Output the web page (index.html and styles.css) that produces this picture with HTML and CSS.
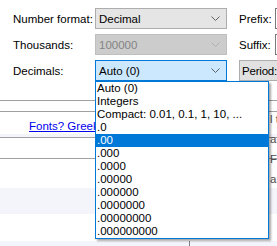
FILE: index.html
```html
<!DOCTYPE html>
<html>
<head>
<meta charset="utf-8">
<link rel="stylesheet" href="styles.css">
</head>
<body>
<div class="page">
  <div class="form">
    <div class="row">
      <span class="label">Number format:</span>
      <div class="select"><span>Decimal</span><svg class="chev" width="9" height="5" viewBox="0 0 9 5"><polyline points="0.5,0.5 4.5,4.5 8.5,0.5" fill="none" stroke="#606060" stroke-width="1"/></svg></div>
      <span class="rlabel">Prefix:</span>
      <div class="input"></div>
    </div>
    <div class="row">
      <span class="label">Thousands:</span>
      <div class="select disabled"><span>100000</span><svg class="chev" width="9" height="5" viewBox="0 0 9 5"><polyline points="0.5,0.5 4.5,4.5 8.5,0.5" fill="none" stroke="#b0b0b0" stroke-width="1"/></svg></div>
      <span class="rlabel">Suffix:</span>
      <div class="input"></div>
    </div>
    <div class="row">
      <span class="label">Decimals:</span>
      <div class="select focused"><span>Auto (0)</span><svg class="chev" width="9" height="5" viewBox="0 0 9 5"><polyline points="0.5,0.5 4.5,4.5 8.5,0.5" fill="none" stroke="#606060" stroke-width="1"/></svg></div>
      <span class="button">Period:</span>
    </div>
  </div>
  <div class="panel">
    <div class="line l1"></div>
    <div class="line l2"></div>
    <div class="linkrow"><a href="#">Fonts? Greek?</a></div>
    <div class="band b1"></div>
    <div class="line l3"></div>
    <div class="line l4"></div>
    <div class="band b2"></div>
    <div class="gap"></div>
    <div class="band b3"><div class="vline"></div></div>
  </div>
  <div class="side">
    <span>l t</span>
    <span>ar</span>
    <span>F r</span>
    <span>ar</span>
  </div>
  <ul class="dropdown">
    <li>Auto (0)</li>
    <li>Integers</li>
    <li>Compact: 0.01, 0.1, 1, 10, ...</li>
    <li>.0</li>
    <li class="sel">.00</li>
    <li>.000</li>
    <li>.0000</li>
    <li>.00000</li>
    <li>.000000</li>
    <li>.0000000</li>
    <li>.00000000</li>
    <li>.000000000</li>
  </ul>
</div>
</body>
</html>
```
FILE: styles.css
```css
html, body {
  margin: 0;
  padding: 0;
  background: #ffffff;
}
.page {
  position: relative;
  width: 277px;
  height: 246px;
  overflow: hidden;
  font-family: "Liberation Sans", Arial, sans-serif;
  font-size: 11.5px;
  color: #000000;
}
.form {
  display: flex;
  flex-direction: column;
  gap: 5px;
  padding-top: 8px;
  padding-left: 13px;
}
.row {
  display: flex;
  align-items: center;
  height: 21px;
  white-space: nowrap;
}
.label {
  width: 82px;
  flex: none;
}
.select {
  width: 132px;
  height: 21px;
  box-sizing: border-box;
  flex: none;
  display: flex;
  align-items: center;
  justify-content: space-between;
  padding: 0 6px 0 3px;
  background: #e5e5e5;
  border: 1px solid #adadad;
}
.select.disabled {
  background: #cccccc;
  border-color: #bfbfbf;
  color: #838383;
}
.select.focused {
  background: #cce8ff;
  border-color: #0078d7;
}
.chev {
  display: block;
}
.rlabel {
  margin-left: 12px;
  width: 36px;
  flex: none;
}
.input {
  width: 20px;
  height: 21px;
  box-sizing: border-box;
  border: 1px solid #7a7a7a;
  background: #fff;
  flex: none;
}
.button {
  margin-left: 12px;
  height: 21px;
  box-sizing: border-box;
  padding: 0 8px 0 2px;
  display: flex;
  align-items: center;
  background: #e1e1e1;
  border: 1px solid #adadad;
  flex: none;
  letter-spacing: -0.2px;
}
.panel {
  display: flex;
  flex-direction: column;
  padding-top: 19px;
}
.line {
  height: 1px;
  background: #a0a0a0;
  flex: none;
}
.l1 { margin-bottom: 10px; }
.l2 { margin-bottom: 7px; }
.linkrow {
  height: 15px;
  line-height: 15px;
  padding-left: 29px;
  white-space: nowrap;
}
.linkrow a {
  color: #0000ee;
  text-decoration: underline;
}
.band {
  background: #f4f4fb;
  flex: none;
}
.b1 { height: 3px; }
.l3 { margin-bottom: 20px; }
.l4 { margin-bottom: 29px; }
.b2 { height: 26px; }
.gap { height: 27px; flex: none; }
.b3 {
  height: 10px;
  position: relative;
}
.vline {
  position: absolute;
  left: 189px;
  top: 0;
  width: 1px;
  height: 10px;
  background: #808080;
}
.side {
  position: absolute;
  left: 270px;
  top: 113px;
  display: flex;
  flex-direction: column;
  gap: 8px;
  color: #505050;
  white-space: nowrap;
}
.dropdown {
  position: absolute;
  left: 95px;
  top: 81px;
  width: 174px;
  box-sizing: border-box;
  margin: 0;
  padding: 0;
  list-style: none;
  background: #ffffff;
  border: 1px solid #0078d7;
  box-shadow: 2px 2px 2px rgba(0,0,0,0.35);
}
.dropdown li {
  height: 13px;
  line-height: 13px;
  padding-left: 1px;
  white-space: nowrap;
}
.dropdown li.sel {
  background: #0078d7;
  color: #ffffff;
}
```
